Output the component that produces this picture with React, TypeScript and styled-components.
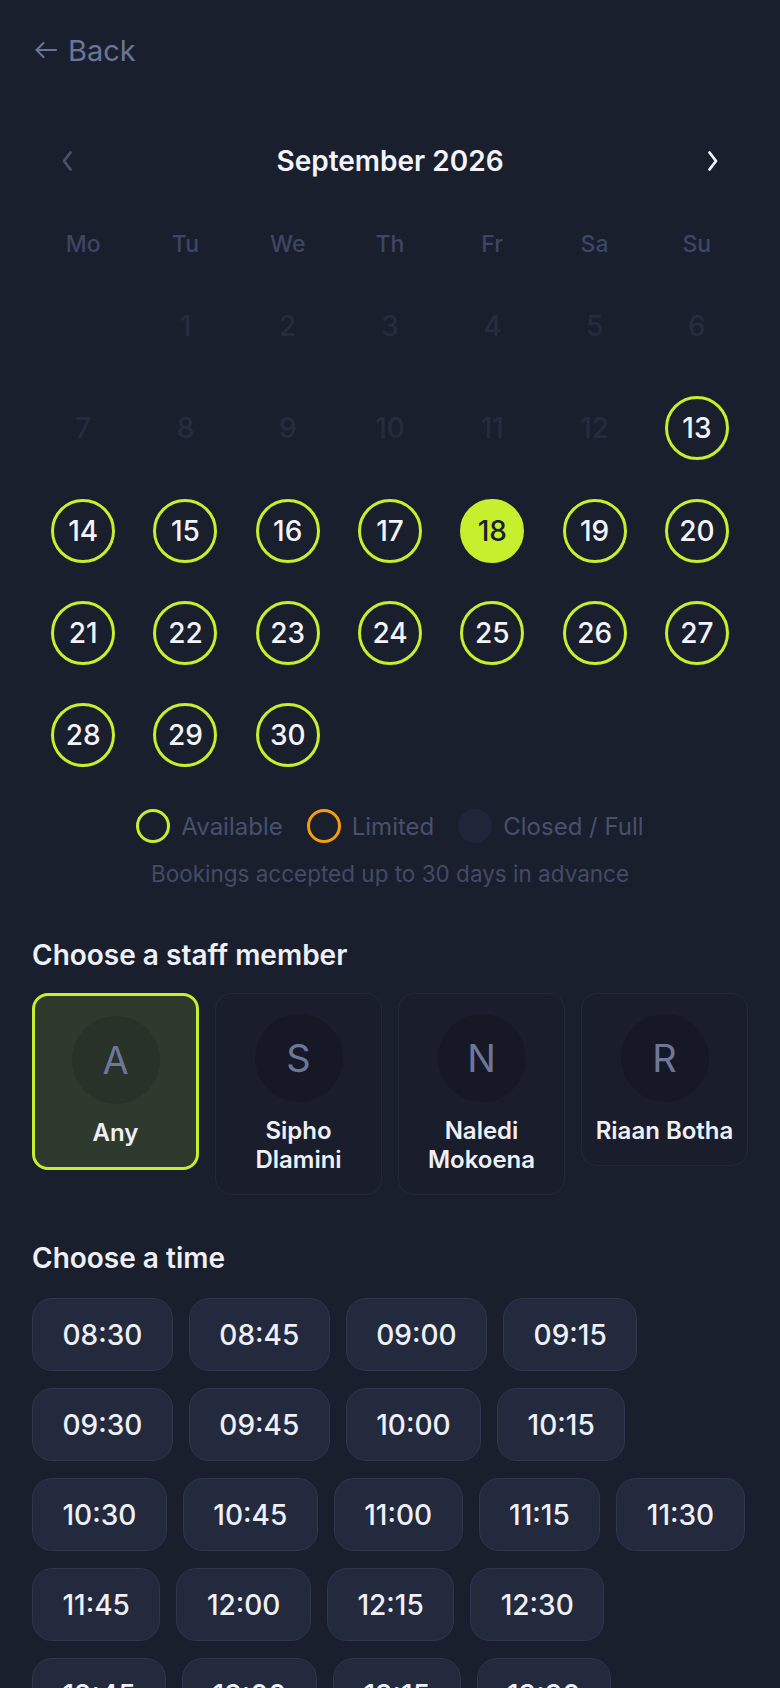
import React from 'react'
import styled, { createGlobalStyle } from 'styled-components'

const Global = createGlobalStyle`
    html, body {
        margin: 0;
        padding: 0;
        background: #1a1f2d;
    }
    body {
        font-family: Inter, "Noto Sans", "Liberation Sans", sans-serif;
        color: #eef0f6;
    }
    * {
        box-sizing: border-box;
    }
`

const Page = styled.div`
    padding: 30px 32px 40px;
    min-height: 1688px;
`

const BackLink = styled.a`
    display: inline-flex;
    align-items: center;
    gap: 11px;
    height: 40px;
    padding-left: 3px;
    font-size: 29px;
    color: #6b7598;
    text-decoration: none;
`

const MonthBar = styled.div`
    display: flex;
    align-items: center;
    justify-content: space-between;
    height: 48px;
    margin-top: 67px;
    padding: 0 13px;
`

const NavButton = styled.button<{ $dim?: boolean }>`
    width: 44px;
    height: 44px;
    display: flex;
    align-items: center;
    justify-content: center;
    background: none;
    border: none;
    padding: 0;
    color: ${p => (p.$dim ? '#4a5169' : '#f2f4fa')};
`

const MonthTitle = styled.h2`
    margin: 0;
    font-size: 28px;
    font-weight: 600;
    color: #f2f4fa;
`

const WeekRow = styled.div`
    display: grid;
    grid-template-columns: repeat(7, 1fr);
    height: 44px;
    margin-top: 37px;
    margin-bottom: 9px;
`

const WeekDay = styled.span`
    display: flex;
    align-items: center;
    justify-content: center;
    font-size: 23px;
    font-weight: 500;
    color: #3d4664;
`

const DayGrid = styled.div`
    display: grid;
    grid-template-columns: repeat(7, 1fr);
`

const DayCell = styled.div`
    aspect-ratio: 1;
    display: flex;
    align-items: center;
    justify-content: center;
`

type DayState = 'closed' | 'open' | 'selected'

const Day = styled.button<{ $state: DayState }>`
    width: 64px;
    height: 64px;
    border-radius: 50%;
    display: flex;
    align-items: center;
    justify-content: center;
    padding: 0;
    font-family: inherit;
    font-size: 28px;
    font-weight: 500;
    border: 3px solid ${p => (p.$state === 'closed' ? 'transparent' : '#c6ef2e')};
    background: ${p => (p.$state === 'selected' ? '#c6ef2e' : 'transparent')};
    color: ${p =>
        p.$state === 'closed' ? '#262c3f' : p.$state === 'selected' ? '#1a1f2d' : '#f2f4fa'};
`

const Legend = styled.div`
    display: flex;
    justify-content: center;
    align-items: center;
    gap: 24px;
    height: 36px;
    margin-top: 22px;
`

const LegendItem = styled.span`
    display: flex;
    align-items: center;
    gap: 11px;
    font-size: 24px;
    color: #48506c;
`

const Swatch = styled.span<{ $ring?: string; $fill?: string }>`
    width: 34px;
    height: 34px;
    border-radius: 50%;
    border: 3px solid ${p => p.$ring ?? 'transparent'};
    background: ${p => p.$fill ?? 'transparent'};
`

const Note = styled.p`
    margin: 16px 0 0;
    text-align: center;
    font-size: 22.5px;
    line-height: 28px;
    color: #434b66;
`

const SectionTitle = styled.h3<{ $top: number }>`
    margin: ${p => p.$top}px 0 0;
    font-size: 28px;
    line-height: 32px;
    font-weight: 600;
    color: #eef0f6;
`

const StaffRow = styled.div`
    display: grid;
    grid-template-columns: repeat(4, 1fr);
    gap: 16px;
    align-items: start;
    margin-top: 22px;
`

const StaffCard = styled.button<{ $active?: boolean }>`
    display: flex;
    flex-direction: column;
    align-items: center;
    gap: 14px;
    padding: 20px 8px;
    font-family: inherit;
    border-radius: 16px;
    border: ${p => (p.$active ? '3px solid #c6ef2e' : '1px solid #24283a')};
    background: ${p => (p.$active ? '#2e3a2e' : '#1a1d2b')};
`

const Avatar = styled.span<{ $active?: boolean }>`
    width: 88px;
    height: 88px;
    border-radius: 50%;
    display: flex;
    align-items: center;
    justify-content: center;
    font-size: 38px;
    color: #6c779b;
    background: ${p => (p.$active ? '#283228' : '#161925')};
`

const StaffName = styled.span`
    font-size: 24px;
    line-height: 29px;
    font-weight: 600;
    color: #eef0f6;
    text-align: center;
`

const Times = styled.div`
    display: flex;
    flex-wrap: wrap;
    gap: 17px 16px;
    margin-top: 24px;
`

const TimeChip = styled.button`
    height: 73px;
    padding: 0 29.5px;
    border-radius: 20px;
    border: 1.5px solid #30364b;
    background: #232a3e;
    font-family: inherit;
    font-size: 28px;
    font-weight: 500;
    color: #eef0f6;
`

const ArrowLeft = () => (
    <svg width="22" height="22" viewBox="0 0 22 22" fill="none" stroke="currentColor" strokeWidth="2" strokeLinecap="round" strokeLinejoin="round">
        <path d="M21 11H1.5" />
        <path d="M8.5 4L1.5 11l7 7" />
    </svg>
)

const Chevron = ({ dir }: { dir: 'left' | 'right' }) => (
    <svg width="14" height="24" viewBox="0 0 14 24" fill="none" stroke="currentColor" strokeWidth="2.8" strokeLinecap="round" strokeLinejoin="round">
        {dir === 'left' ? <path d="M10.5 3.5L4 12l6.5 8.5" /> : <path d="M3.5 3.5L10 12l-6.5 8.5" />}
    </svg>
)

const weekDays = ['Mo', 'Tu', 'We', 'Th', 'Fr', 'Sa', 'Su']

const staff = [
    { initial: 'A', name: 'Any' },
    { initial: 'S', name: 'Sipho Dlamini' },
    { initial: 'N', name: 'Naledi Mokoena' },
    { initial: 'R', name: 'Riaan Botha' },
]

const times = [
    '08:30', '08:45', '09:00', '09:15', '09:30', '09:45', '10:00', '10:15',
    '10:30', '10:45', '11:00', '11:15', '11:30', '11:45', '12:00', '12:15',
    '12:30', '12:45', '13:00', '13:15', '13:30',
]

const dayState = (d: number): DayState => (d < 13 ? 'closed' : d === 18 ? 'selected' : 'open')

const App = () => {
    const cells: (number | null)[] = [null, ...Array.from({ length: 30 }, (_, i) => i + 1)]

    return (
        <Page>
            <Global />
            <BackLink href="#">
                <ArrowLeft /> Back
            </BackLink>

            <MonthBar>
                <NavButton $dim>
                    <Chevron dir="left" />
                </NavButton>
                <MonthTitle>September 2026</MonthTitle>
                <NavButton>
                    <Chevron dir="right" />
                </NavButton>
            </MonthBar>

            <WeekRow>
                {weekDays.map(w => (
                    <WeekDay key={w}>{w}</WeekDay>
                ))}
            </WeekRow>

            <DayGrid>
                {cells.map((d, i) => (
                    <DayCell key={i}>{d && <Day $state={dayState(d)}>{d}</Day>}</DayCell>
                ))}
            </DayGrid>

            <Legend>
                <LegendItem>
                    <Swatch $ring="#c6ef2e" /> Available
                </LegendItem>
                <LegendItem>
                    <Swatch $ring="#f59e0b" /> Limited
                </LegendItem>
                <LegendItem>
                    <Swatch $fill="#20253a" /> Closed / Full
                </LegendItem>
            </Legend>
            <Note>Bookings accepted up to 30 days in advance</Note>

            <SectionTitle $top={51}>Choose a staff member</SectionTitle>
            <StaffRow>
                {staff.map((s, i) => (
                    <StaffCard key={s.name} $active={i === 0}>
                        <Avatar $active={i === 0}>{s.initial}</Avatar>
                        <StaffName>{s.name}</StaffName>
                    </StaffCard>
                ))}
            </StaffRow>

            <SectionTitle $top={47}>Choose a time</SectionTitle>
            <Times>
                {times.map(t => (
                    <TimeChip key={t}>{t}</TimeChip>
                ))}
            </Times>
        </Page>
    )
}

export default App
